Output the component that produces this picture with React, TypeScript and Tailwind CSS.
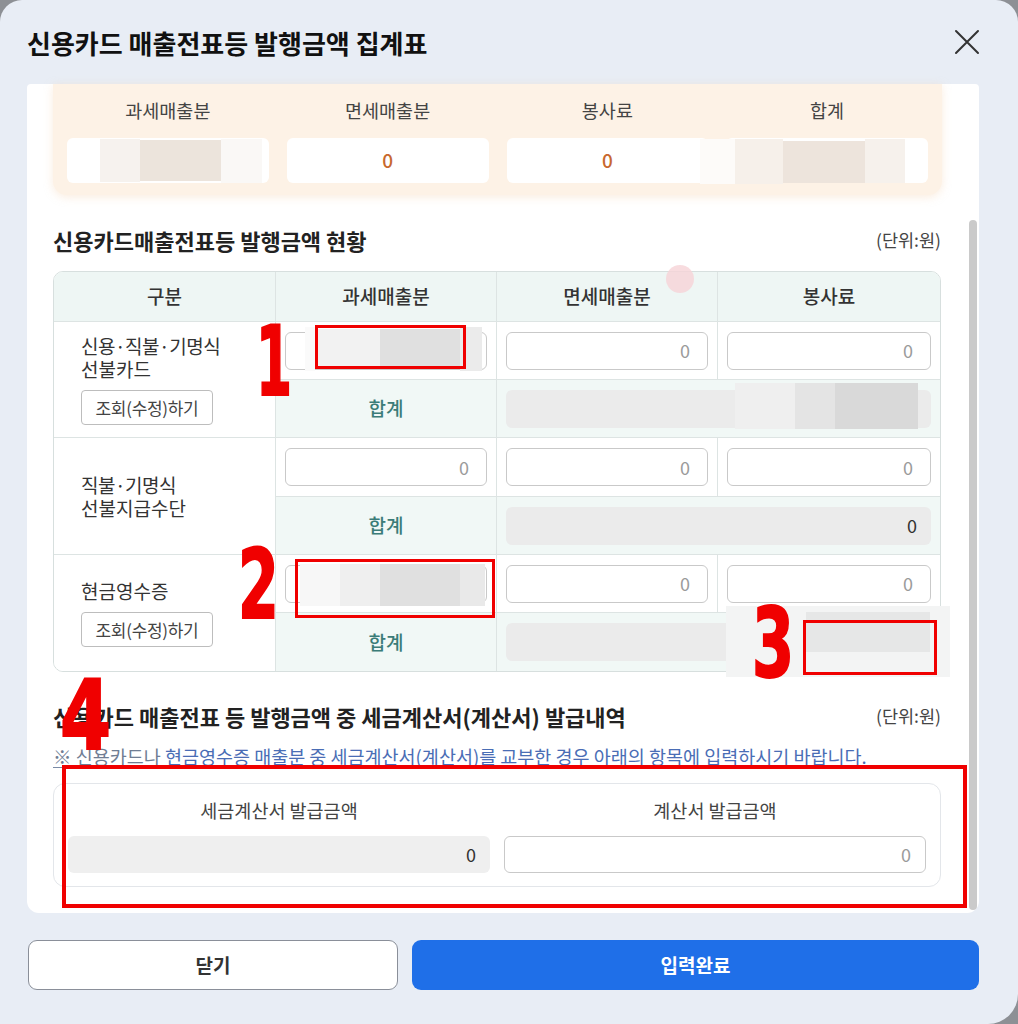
import React from "react";

const Input = ({ value }: { value?: string }) => (
  <div className="h-[38px] w-full rounded-[6px] border border-[#c9c9c9] bg-white flex items-center justify-end pr-[17px] text-[18px] text-[#9b9b9b]">
    {value}
  </div>
);

const SumBox = ({ value }: { value?: string }) => (
  <div className="h-[38px] w-full rounded-[6px] bg-[#ebebeb] flex items-center justify-end pr-[14px] text-[18px] text-[#333]">
    {value}
  </div>
);

const Btn = () => (
  <div className="mt-[10px] w-[132px] h-[35px] rounded-[4px] border border-[#bdbdbd] bg-white flex items-center justify-center text-[17px] text-[#444] tracking-[-0.3px]">
    조회(수정)하기
  </div>
);

const Blk = ({ l, t, w, h, c }: { l: number; t: number; w: number; h: number; c: string }) => (
  <div className="absolute" style={{ left: l, top: t, width: w, height: h, background: c }} />
);

const RedBox = ({ l, t, w, h, b = 3 }: { l: number; t: number; w: number; h: number; b?: number }) => (
  <div className="absolute border-[#f00000]" style={{ left: l, top: t, width: w, height: h, borderWidth: b, borderStyle: "solid" }} />
);

const Num = ({ n, l, t, sx = 0.62 }: { n: string; l: number; t: number; sx?: number }) => (
  <div
    className="absolute text-[96px] leading-none font-bold text-[#f00000] font-[family-name:'DejaVu_Sans_Condensed','DejaVu_Sans',sans-serif] origin-left [-webkit-text-stroke:2px_#f00000]"
    style={{ left: l, top: t, transform: `scaleX(${sx})` }}
  >
    {n}
  </div>
);

export default function App() {
  const cellB = "border-[#dde4e3]";
  return (
    <div className="relative w-[1018px] h-[1024px] bg-[#8d9095] overflow-hidden font-[family-name:'Noto_Sans_CJK_KR','Noto_Sans',sans-serif]">
      <div className="w-full h-full bg-[#e8edf5] rounded-t-[22px] rounded-br-[30px] flex flex-col">
        {/* header */}
        <div className="h-[84px] pl-[27px] pr-[38px] flex items-center justify-between">
          <div className="text-[26px] font-bold text-[#111]">신용카드 매출전표등 발행금액 집계표</div>
          <svg width="26" height="26" viewBox="0 0 26 26">
            <path d="M2 2 L24 24 M24 2 L2 24" stroke="#333" strokeWidth="2" strokeLinecap="round" />
          </svg>
        </div>

        {/* panel */}
        <div className="ml-[27px] w-[952px] h-[829px] bg-white rounded-b-[12px] rounded-t-[4px] flex">
          <div className="w-[914px] pl-[26px] flex flex-col">
            {/* summary */}
            <div className="w-[889px] h-[111px] bg-[#fdf2e6] rounded-b-[14px] shadow-[0_2px_10px_rgba(240,200,160,0.35)] pt-[16px] pb-[12px] px-[14px]">
              <div className="grid grid-cols-4 gap-x-[18px]">
                {["과세매출분", "면세매출분", "봉사료", "합계"].map((t) => (
                  <div key={t} className="h-[22px] flex items-center justify-center text-[18.5px] text-[#444]">
                    {t}
                  </div>
                ))}
              </div>
              <div className="mt-[16px] grid grid-cols-4 gap-x-[18px]">
                <div className="h-[45px] bg-white rounded-[6px]" />
                <div className="h-[45px] bg-white rounded-[6px] flex items-center justify-center text-[19px] font-medium text-[#c8682e]">0</div>
                <div className="h-[45px] bg-white rounded-[6px] flex items-center justify-center text-[19px] font-medium text-[#c8682e]">0</div>
                <div className="h-[45px] bg-white rounded-[6px]" />
              </div>
            </div>

            {/* heading 1 */}
            <div className="mt-[32px] h-[26px] w-[888px] flex items-center justify-between">
              <div className="text-[22px] font-bold text-[#222]">신용카드매출전표등 발행금액 현황</div>
              <div className="text-[17.5px] text-[#444]">(단위:원)</div>
            </div>

            {/* table */}
            <div className="mt-[18px] w-[888px] border border-[#d7dfde] rounded-[10px] overflow-hidden grid grid-cols-[222px_221px_221px_222px] grid-rows-[50px_58px_58px_59px_58px_58px_58px] text-[19px] text-[#333]">
              <div className={`bg-[#eef6f4] border-r border-b ${cellB} flex items-center justify-center font-medium`}>구분</div>
              <div className={`bg-[#eef6f4] border-r border-b ${cellB} flex items-center justify-center font-medium`}>과세매출분</div>
              <div className={`bg-[#eef6f4] border-r border-b ${cellB} flex items-center justify-center font-medium`}>면세매출분</div>
              <div className={`bg-[#eef6f4] border-b ${cellB} flex items-center justify-center font-medium`}>봉사료</div>

              {/* row 1 */}
              <div className={`row-span-2 border-r border-b ${cellB} bg-white pl-[27px] flex flex-col justify-center`}>
                <div className="leading-[23px] tracking-[-0.5px]">신용·직불·기명식</div>
                <div className="leading-[23px]">선불카드</div>
                <Btn />
              </div>
              <div className={`border-r border-b ${cellB} bg-white px-[9px] flex items-center`}><Input /></div>
              <div className={`border-r border-b ${cellB} bg-white px-[9px] flex items-center`}><Input value="0" /></div>
              <div className={`border-b ${cellB} bg-white px-[9px] flex items-center`}><Input value="0" /></div>
              <div className={`border-r border-b ${cellB} bg-[#f1f8f6] flex items-center justify-center text-[#3b7c78] font-medium`}>합계</div>
              <div className={`col-span-2 border-b ${cellB} bg-[#f1f8f6] px-[9px] flex items-center`}><SumBox /></div>

              {/* row 2 */}
              <div className={`row-span-2 border-r border-b ${cellB} bg-white pl-[27px] flex flex-col justify-center`}>
                <div className="leading-[23px] tracking-[-0.5px]">직불·기명식</div>
                <div className="leading-[23px]">선불지급수단</div>
              </div>
              <div className={`border-r border-b ${cellB} bg-white px-[9px] flex items-center`}><Input value="0" /></div>
              <div className={`border-r border-b ${cellB} bg-white px-[9px] flex items-center`}><Input value="0" /></div>
              <div className={`border-b ${cellB} bg-white px-[9px] flex items-center`}><Input value="0" /></div>
              <div className={`border-r border-b ${cellB} bg-[#f1f8f6] flex items-center justify-center text-[#3b7c78] font-medium`}>합계</div>
              <div className={`col-span-2 border-b ${cellB} bg-[#f1f8f6] px-[9px] flex items-center`}><SumBox value="0" /></div>

              {/* row 3 */}
              <div className={`row-span-2 border-r ${cellB} bg-white pl-[27px] flex flex-col justify-center`}>
                <div className="leading-[23px]">현금영수증</div>
                <Btn />
              </div>
              <div className={`border-r border-b ${cellB} bg-white px-[9px] flex items-center`}><Input /></div>
              <div className={`border-r border-b ${cellB} bg-white px-[9px] flex items-center`}><Input value="0" /></div>
              <div className={`border-b ${cellB} bg-white px-[9px] flex items-center`}><Input value="0" /></div>
              <div className={`border-r ${cellB} bg-[#f1f8f6] flex items-center justify-center text-[#3b7c78] font-medium`}>합계</div>
              <div className={`col-span-2 bg-[#f1f8f6] px-[9px] flex items-center`}><SumBox /></div>
            </div>

            {/* heading 2 */}
            <div className="mt-[31px] h-[26px] w-[888px] flex items-center justify-between">
              <div className="text-[22px] font-bold text-[#222]">신용카드 매출전표 등 발행금액 중 세금계산서(계산서) 발급내역</div>
              <div className="text-[17.5px] text-[#444]">(단위:원)</div>
            </div>
            <div className="mt-[16px] h-[24px] flex items-center text-[18.5px] underline underline-offset-[3px] decoration-[#7a8aa6] whitespace-nowrap">
              <span className="text-[#6f7d93]">※ 신용카드나&nbsp;</span>
              <span className="text-[#4a6db5]">현금영수증 매출분 중 세금계산서(계산서)를 교부한 경우 아래의 항목에 입력하시기 바랍니다.</span>
            </div>

            {/* tax invoice box */}
            <div className="mt-[14px] w-[888px] h-[104px] rounded-[12px] border border-[#e3e6ea] bg-white px-[14px] pt-[15px]">
              <div className="grid grid-cols-2 gap-x-[14px]">
                <div className="h-[24px] flex items-center justify-center text-[18.5px] text-[#444]">세금계산서 발급금액</div>
                <div className="h-[24px] flex items-center justify-center text-[18.5px] text-[#444]">계산서 발급금액</div>
              </div>
              <div className="mt-[13px] grid grid-cols-2 gap-x-[14px]">
                <div className="h-[37px] rounded-[6px] bg-[#efefef] flex items-center justify-end pr-[14px] text-[18px] text-[#333]">0</div>
                <div className="h-[37px] rounded-[6px] border border-[#c9c9c9] bg-white flex items-center justify-end pr-[14px] text-[18px] text-[#9b9b9b]">0</div>
              </div>
            </div>
          </div>
          <div className="ml-[28px] w-[8px] pt-[136px] pb-[3px] flex">
            <div className="w-full bg-[#cacaca] rounded-full" />
          </div>
        </div>

        {/* footer */}
        <div className="mt-[27px] pl-[28px] pr-[39px] flex gap-[14px]">
          <div className="w-[370px] h-[50px] rounded-[9px] border border-[#8a8f99] bg-white flex items-center justify-center text-[19px] font-bold text-[#333]">
            닫기
          </div>
          <div className="flex-1 h-[50px] rounded-[9px] bg-[#1f6fe8] flex items-center justify-center text-[19px] font-bold text-white">
            입력완료
          </div>
        </div>
      </div>

      {/* touch indicator */}
      <div className="absolute left-[666px] top-[265px] w-[28px] h-[28px] rounded-full bg-[#f6d3d7] opacity-80" />

      {/* blurred regions */}
      <Blk l={100} t={139} w={40} h={43} c="#f6f2ee" />
      <Blk l={140} t={140} w={81} h={41} c="#ece4dc" />
      <Blk l={221} t={139} w={41} h={44} c="#faf8f6" />
      <Blk l={700} t={139} w={35} h={45} c="#fdfbf9" />
      <Blk l={735} t={139} w={48} h={45} c="#f6f0ea" />
      <Blk l={783} t={141} w={82} h={42} c="#ede4dc" />
      <Blk l={865} t={139} w={40} h={44} c="#f6f1ec" />

      <Blk l={305} t={327} w={10} h={44} c="#fafafa" />
      <Blk l={315} t={329} w={65} h={40} c="#f2f2f2" />
      <Blk l={380} t={329} w={80} h={40} c="#e0e0e0" />
      <Blk l={460} t={327} w={22} h={44} c="#ebebeb" />

      <Blk l={735} t={383} w={60} h={46} c="#efefef" />
      <Blk l={795} t={383} w={40} h={46} c="#e4e4e4" />
      <Blk l={835} t={383} w={83} h={46} c="#d9d9d9" />

      <Blk l={300} t={564} w={40} h={42} c="#f7f7f7" />
      <Blk l={340} t={564} w={40} h={42} c="#efefef" />
      <Blk l={380} t={564} w={80} h={42} c="#e0e0e0" />
      <Blk l={460} t={564} w={25} h={42} c="#e9e9e9" />

      <Blk l={726} t={606} w={224} h={71} c="#f3f4f4" />
      <Blk l={806} t={612} w={124} h={40} c="#e6e7e7" />

      {/* annotations */}
      <RedBox l={315} t={325} w={151} h={44} />
      <RedBox l={295} t={559} w={200} h={59} />
      <RedBox l={803} t={620} w={134} h={55} />
      <RedBox l={62} t={765} w={905} h={143} b={4} />
      <Num n="1" l={256} t={314} sx={0.6} />
      <Num n="2" l={238} t={537} sx={0.68} />
      <Num n="3" l={752} t={596} sx={0.7} />
      <Num n="4" l={60} t={668} sx={0.85} />
    </div>
  );
}
